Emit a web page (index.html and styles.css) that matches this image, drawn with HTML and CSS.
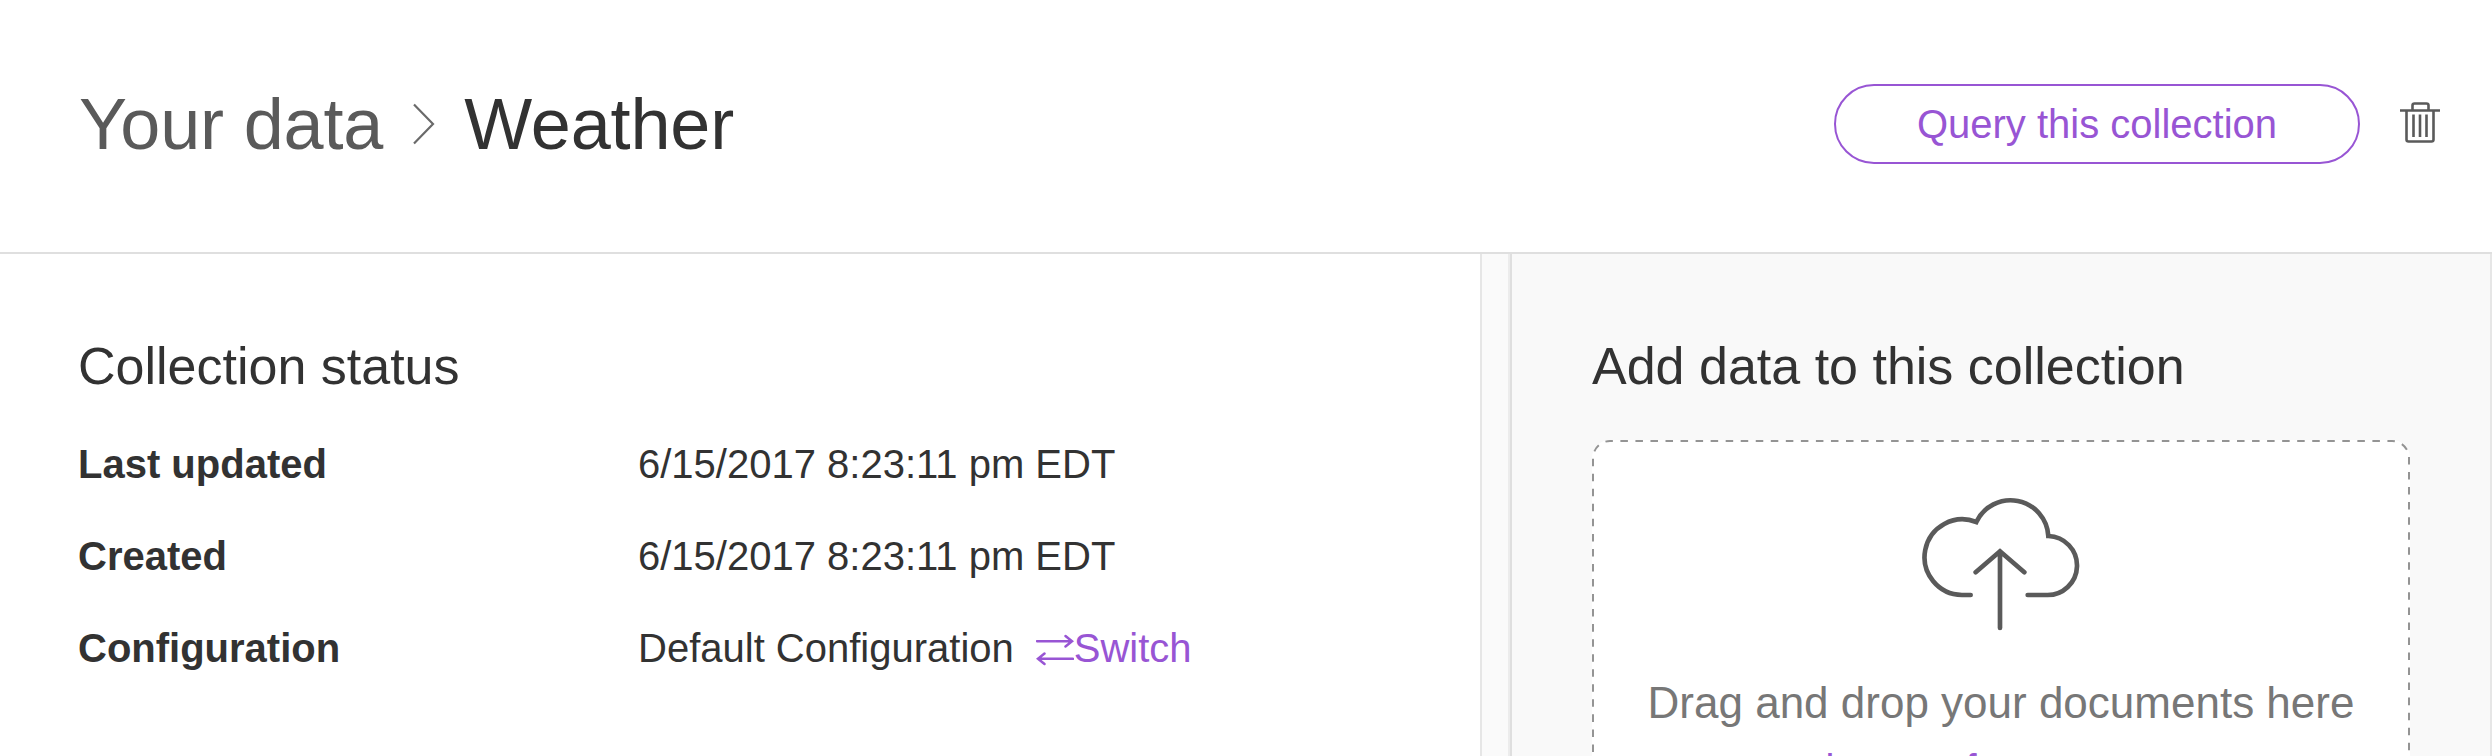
FILE: index.html
```html
<!DOCTYPE html>
<html lang="en">
<head>
<meta charset="utf-8">
<title>Weather</title>
<link rel="stylesheet" href="styles.css">
</head>
<body>
<header class="header">
  <h1 class="breadcrumb">
    <a class="breadcrumb-parent">Your data</a>
    <svg class="chevron" width="24" height="44" viewBox="0 0 24 44"><path d="M2 2.5L21 22L2 41.5"/></svg>
    <span>Weather</span>
  </h1>
  <div class="actions">
    <button class="query-button">Query this collection</button>
    <svg class="trash" width="40" height="44" viewBox="0 0 40 44"><path d="M0 9.5H40M12.5 9V4.5a2 2 0 0 1 2-2h12a2 2 0 0 1 2 2V9M6.5 10V38.5a2 2 0 0 0 2 2h23a2 2 0 0 0 2-2V10M13.5 13.5V36M20 13.5V36M26.5 13.5V36"/></svg>
  </div>
</header>
<main class="content">
  <section class="status">
    <h2 class="section-title">Collection status</h2>
    <dl class="details">
      <dt>Last updated</dt><dd>6/15/2017 8:23:11 pm EDT</dd>
      <dt>Created</dt><dd>6/15/2017 8:23:11 pm EDT</dd>
      <dt>Configuration</dt>
      <dd>Default Configuration
        <a class="switch"><svg class="switch-icon" width="38" height="32" viewBox="0 0 38 32"><path d="M1 7.2H36M29.5 2L36 7.2L29.5 12.4M37 24.8H2M8.500 19.600L2 24.800L8.500 30"/></svg>Switch</a>
      </dd>
    </dl>
  </section>
  <div class="gutter"></div>
  <aside class="add-data">
    <h2 class="section-title">Add data to this collection</h2>
    <div class="dropzone">
      <svg class="outline" width="818" height="316" viewBox="0 0 818 316"><path d="M1 327V18A17 17 0 0 1 18 1H800A17 17 0 0 1 817 18V330"/></svg>
      <svg class="cloud" width="240" height="160" viewBox="0 0 720 480"><path d="M272 345H246A113.5 113.5 0 1 1 289 126A113.5 113.5 0 0 1 505 168A88.5 88.5 0 0 1 500 345H443M360 444V214M287 277L360 214L433 277"/></svg>
      <p class="drop-text">Drag and drop your documents here</p>
      <p class="browse-text">or <a class="browse-link">browse from computer</a></p>
    </div>
  </aside>
</main>
</body>
</html>
```
FILE: styles.css
```css
* { box-sizing: border-box; }
body {
  margin: 0;
  height: 756px;
  overflow: hidden;
  display: flex;
  flex-direction: column;
  background: #fff;
  color: #323232;
  font-family: "Liberation Sans", Arial, sans-serif;
  font-size: 40px;
}
h1, h2, p, dl, dd { margin: 0; font-weight: 400; }
svg { display: block; fill: none; flex: none; }
.header {
  height: 254px;
  flex: none;
  display: flex;
  justify-content: space-between;
  align-items: center;
  padding: 0 52px 4px 79px;
  border-bottom: 2px solid #dfdfdf;
}
.breadcrumb {
  display: flex;
  align-items: center;
  font-size: 72px;
  line-height: 80px;
  letter-spacing: -0.15px;
}
.breadcrumb-parent { color: #5a5a5a; }
.chevron { margin: 0 28px 0 29px; stroke: #6a6a6a; stroke-width: 2.2; }
.actions { display: flex; align-items: center; gap: 40px; }
.query-button {
  width: 526px;
  height: 80px;
  padding: 0;
  border: 2px solid #9855d4;
  border-radius: 40px;
  background: #fff;
  color: #9855d4;
  font: inherit;
}
.trash { margin-bottom: 3px; stroke: #5a5a5a; stroke-width: 2.6; }
.content { flex: 1; min-height: 0; display: flex; overflow: hidden; }
.status { width: 1480px; padding: 82px 0 0 78px; }
.section-title { font-size: 52px; line-height: 60px; white-space: nowrap; }
.details {
  display: grid;
  grid-template-columns: 560px 1fr;
  grid-auto-rows: 92px;
  line-height: 92px;
  margin-top: 22px;
}
.details dt { font-weight: 700; }
.details dd { display: flex; }
.switch { display: flex; align-items: center; margin-left: 22px; color: #9855d4; }
.switch-icon { margin: 4px 0 0; stroke: #9855d4; stroke-width: 2.5; stroke-linecap: round; }
.gutter {
  width: 32px;
  flex: none;
  border-left: 2px solid #e6e6e6;
  border-right: 2px solid #dfdfdf;
  background: linear-gradient(to left, #ececec 2px, #fafafa 2px);
}
.add-data {
  flex: 1;
  padding: 82px 80px 0;
  background: #f9f9f9;
  border-right: 2px solid #e6e6e6;
}
.dropzone {
  position: relative;
  width: 818px;
  height: 316px;
  margin-top: 44px;
  padding-top: 40px;
  display: flex;
  flex-direction: column;
  align-items: center;
  border-radius: 18px 18px 0 0;
  background: #fff;
}
.outline {
  position: absolute;
  top: 0;
  left: 0;
  stroke: #949494;
  stroke-width: 2;
  stroke-dasharray: 7.52 7.52;
}
.cloud { margin-right: 3px; stroke: #5a5a5a; stroke-width: 14; stroke-linecap: round; }
.drop-text { margin-top: 33px; font-size: 44px; line-height: 60px; color: #777; }
.browse-text { margin-top: 11px; line-height: 50px; color: #777; }
.browse-link { color: #9855d4; }
```
